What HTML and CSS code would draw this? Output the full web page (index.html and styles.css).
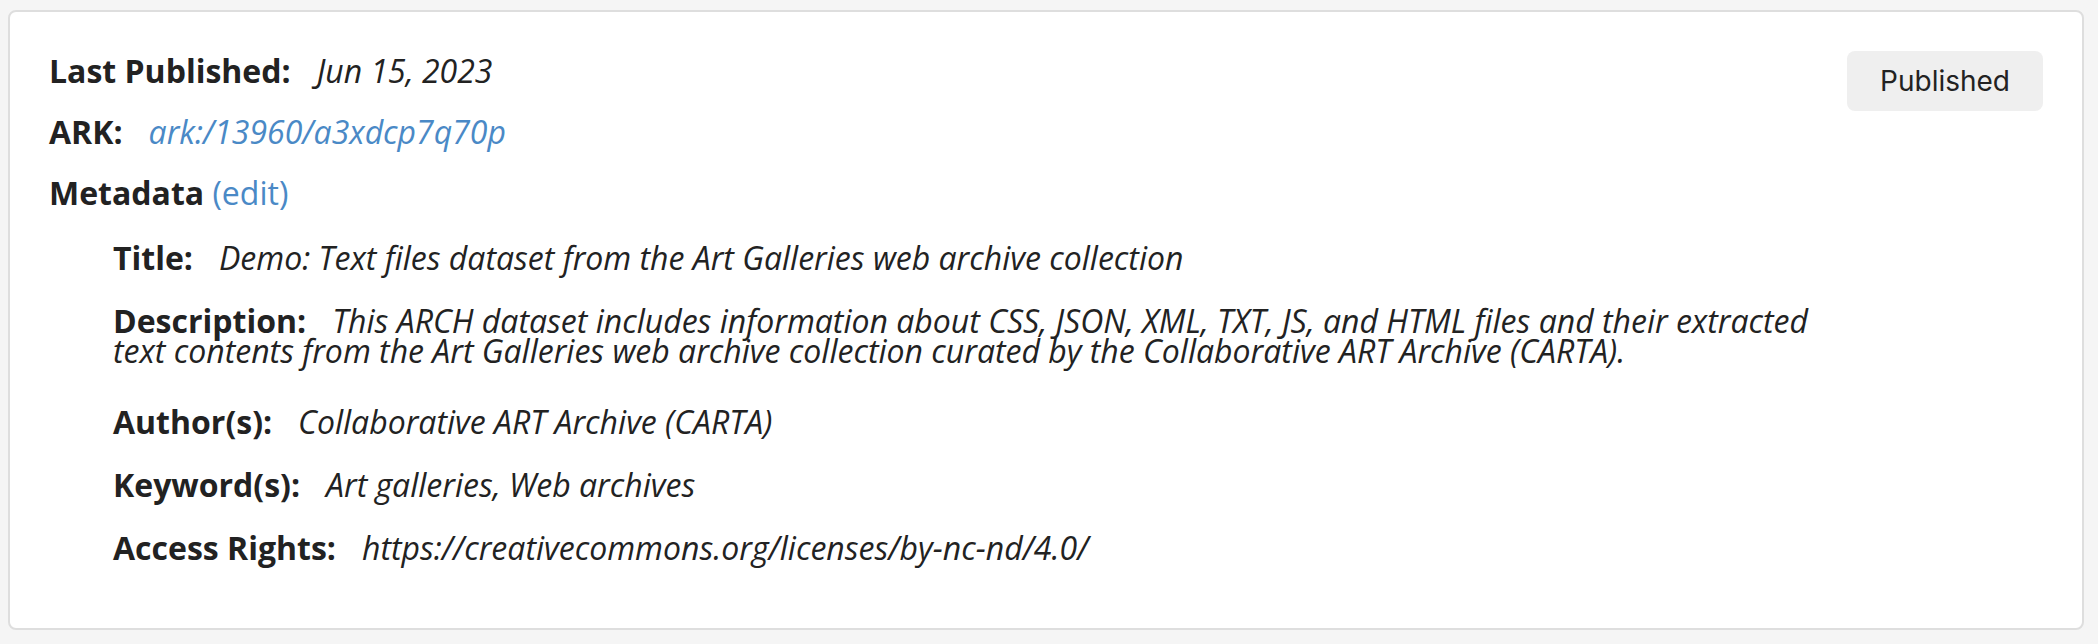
FILE: index.html
```html
<!DOCTYPE html>
<html lang="en">
<head>
<meta charset="utf-8">
<title>Dataset publication</title>
<link rel="stylesheet" href="styles.css">
</head>
<body>
<section class="card">
  <div class="info">
    <div class="row"><span class="label">Last Published:</span><span class="value">Jun 15, 2023</span></div>
    <div class="row"><span class="label">ARK:</span><a class="value link" href="#">ark:/13960/a3xdcp7q70p</a></div>
    <div class="row meta-heading"><span class="label-plain">Metadata</span> <a class="edit" href="#">(edit)</a></div>
    <div class="meta-list">
      <div class="row"><span class="label">Title:</span><span class="value">Demo: Text files dataset from the Art Galleries web archive collection</span></div>
      <div class="row desc"><span class="label">Description:</span><span class="value">This ARCH dataset includes information about CSS, JSON, XML, TXT, JS, and HTML files and their extracted text contents from the Art Galleries web archive collection curated by the Collaborative ART Archive (CARTA).</span></div>
      <div class="row"><span class="label">Author(s):</span><span class="value">Collaborative ART Archive (CARTA)</span></div>
      <div class="row"><span class="label">Keyword(s):</span><span class="value">Art galleries, Web archives</span></div>
      <div class="row"><span class="label">Access Rights:</span><span class="value">https://creativecommons.org/licenses/by-nc-nd/4.0/</span></div>
    </div>
  </div>
  <div class="status">Published</div>
</section>
</body>
</html>
```

FILE: styles.css
```css
html, body {
  margin: 0;
  padding: 0;
}

body {
  background: #f5f5f5;
  font-family: "Open Sans", "Noto Sans", sans-serif;
  font-size: 32px;
  color: #222222;
}

.card {
  margin: 10px 14px 16px 8px;
  background: #ffffff;
  border: 2px solid #dedede;
  border-radius: 8px;
  padding: 39px;
  display: flex;
  justify-content: space-between;
  align-items: flex-start;
  gap: 20px;
}

.info {
  flex: 1;
  margin-top: 5px;
  margin-bottom: 26px;
  display: flex;
  flex-direction: column;
  gap: 31px;
  line-height: 30px;
}

.row {
  margin: 0;
}

.label {
  font-weight: 700;
  margin-right: 26px;
}

.label-plain {
  font-weight: 700;
}

.value {
  font-style: italic;
}

.link,
.edit {
  color: #4a89c6;
  text-decoration: none;
}

.meta-heading {
  margin-bottom: 4px;
}

.meta-list {
  padding-left: 64px;
  display: flex;
  flex-direction: column;
  gap: 33px;
}

.desc {
  margin-bottom: 8px;
}

.status {
  flex: none;
  height: 60px;
  padding: 0 33px;
  display: flex;
  align-items: center;
  background: #efefef;
  border-radius: 8px;
  font-family: Inter, "Liberation Sans", sans-serif;
  font-size: 28px;
  line-height: 1;
  color: #222222;
}
```
